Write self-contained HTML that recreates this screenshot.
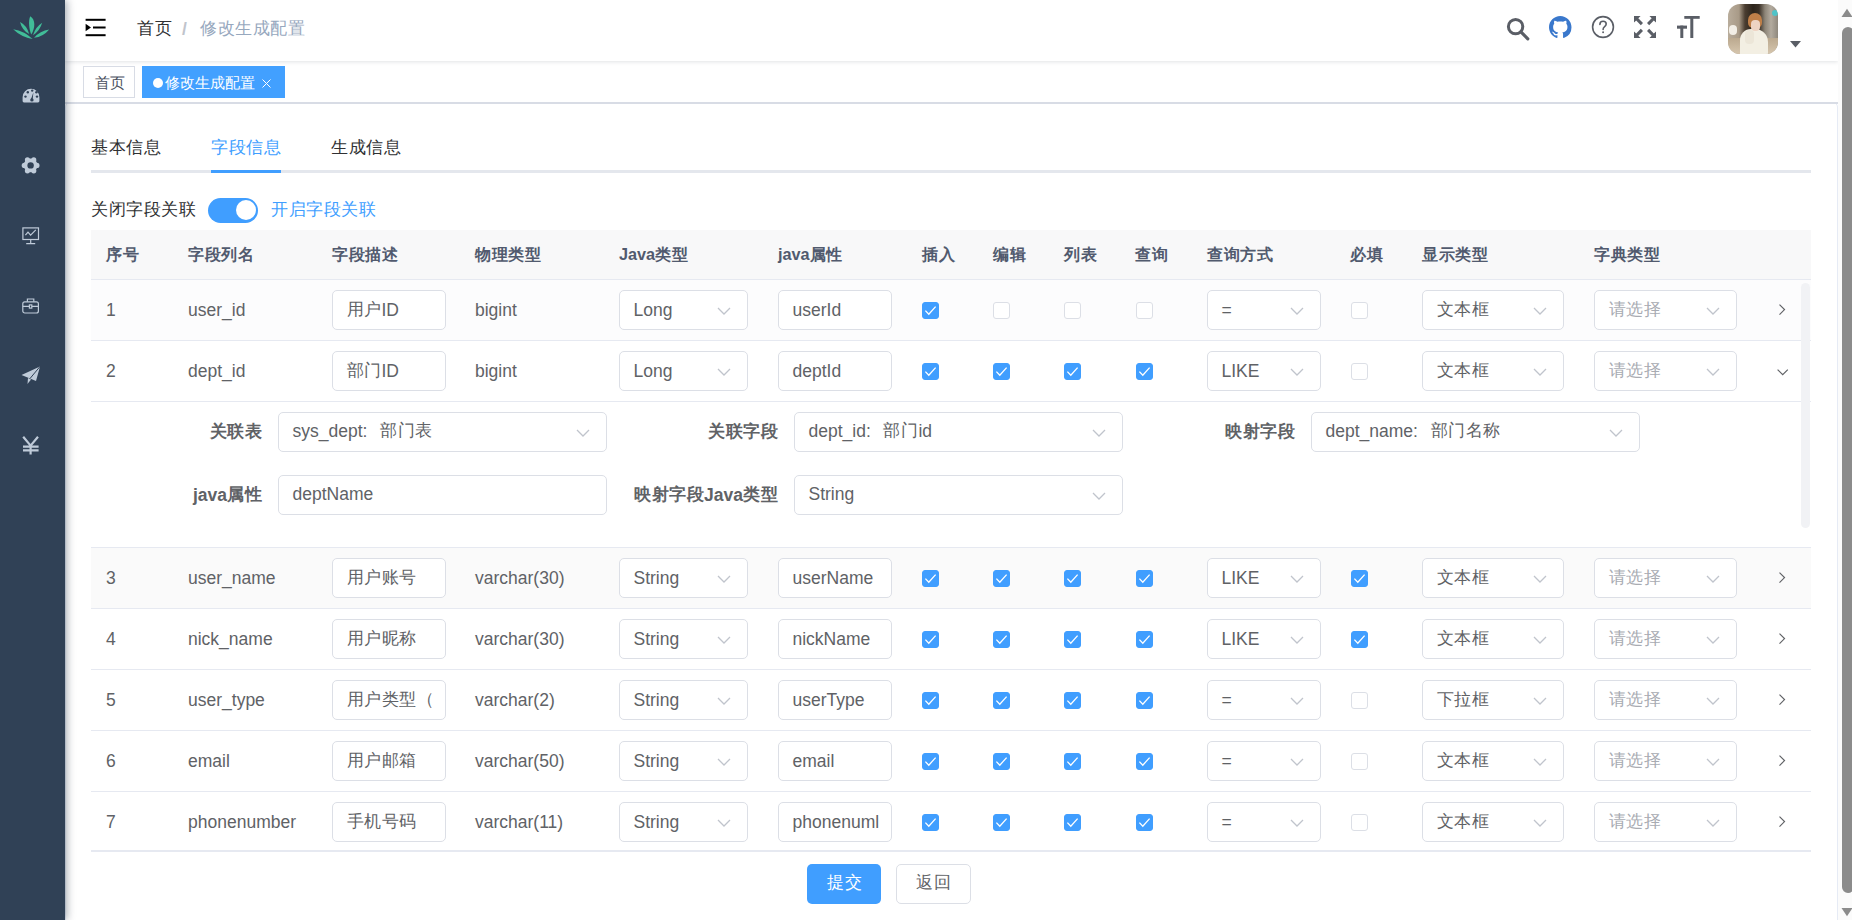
<!DOCTYPE html><html><head><meta charset="utf-8"><title>修改生成配置</title><style>
*{box-sizing:border-box;}
html,body{margin:0;padding:0;}
body{width:1852px;height:920px;overflow:hidden;position:relative;background:#fff;font-family:"Liberation Sans", sans-serif;color:#606266;}
.a{position:absolute;}
.t{position:absolute;white-space:nowrap;line-height:1;}
.inp{position:absolute;border:1px solid #dcdfe6;border-radius:5px;background:#fff;height:40px;}
.inp>span{position:absolute;left:13.5px;top:9px;font-size:17.5px;line-height:20px;color:#606266;white-space:nowrap;}
.sel>span.ph{color:#a8abb2;}
.chev{position:absolute;top:16px;width:14px;height:8px;}
.cb{position:absolute;width:17px;height:17px;border-radius:3px;border:1px solid #dcdfe6;background:#fff;}
.cb.on{background:#409eff;border-color:#409eff;}
.th{position:absolute;top:246px;font-size:16.25px;font-weight:bold;color:#515a6e;line-height:17px;white-space:nowrap;}
.td{position:absolute;font-size:17.5px;color:#606266;line-height:20px;white-space:nowrap;}
.hl{position:absolute;left:91px;width:1720px;height:1px;background:#e6e9f1;}
.lbl{position:absolute;font-size:17.5px;font-weight:bold;color:#606266;line-height:20px;white-space:nowrap;text-align:right;}
</style></head><body>
<div class="a" style="left:65px;top:102px;width:1773px;height:830px;border:1px solid #e6ebf5;border-radius:5px;background:#fff;"></div>
<div class="a" style="left:65px;top:61px;width:1773px;height:43px;background:#fff;border-bottom:2px solid #d8dce5;"></div>
<div class="a" style="left:83px;top:66px;width:52px;height:32px;border:1px solid #d8dce5;background:#fff;"></div>
<div class="t" style="left:95px;top:74px;font-size:15px;line-height:17px;color:#495060;">首页</div>
<div class="a" style="left:142px;top:66px;width:143px;height:32px;background:#42a0ff;"></div>
<div class="a" style="left:153px;top:78px;width:10px;height:10px;border-radius:50%;background:#fff;"></div>
<div class="t" style="left:165px;top:74px;font-size:15px;line-height:17px;color:#fff;">修改生成配置</div>
<svg class="a" style="left:261px;top:78px" width="11" height="11" viewBox="0 0 11 11"><path d="M1.5 1.5 L9.5 9.5 M9.5 1.5 L1.5 9.5" stroke="#fff" stroke-width="1"/></svg>
<div class="a" style="left:65px;top:0;width:1773px;height:61px;background:#fff;box-shadow:0 1px 4px rgba(0,21,41,.12);"></div>
<svg class="a" style="left:85px;top:18px" width="21" height="19" viewBox="0 0 21 19">
<rect x="0.6" y="0.8" width="20" height="2" fill="#000"/>
<rect x="8" y="8.5" width="12.6" height="2" fill="#000"/>
<rect x="0.6" y="16.2" width="20" height="2" fill="#000"/>
<path d="M0.6 5.8 L6 9.5 L0.6 13.2 Z" fill="#000"/>
</svg>
<div class="t" style="left:137px;top:19px;font-size:17.5px;line-height:20px;color:#303133;"><span style="font-size:17px;letter-spacing:0.5px;position:relative;top:-1px">首页</span></div>
<div class="t" style="left:182px;top:19px;font-size:17.5px;line-height:20px;color:#c0c4cc;font-weight:bold;">/</div>
<div class="t" style="left:200px;top:19px;font-size:17.5px;line-height:20px;color:#97a8be;"><span style="font-size:17px;letter-spacing:0.5px;position:relative;top:-1px">修改生成配置</span></div>
<svg class="a" style="left:1506px;top:17px" width="26" height="26" viewBox="0 0 26 26">
<circle cx="9.6" cy="9.6" r="7.2" fill="none" stroke="#5a5e66" stroke-width="3"/>
<path d="M14.9 14.9 L21.8 21.8" stroke="#5a5e66" stroke-width="3.2" stroke-linecap="round"/>
</svg>
<svg class="a" style="left:1549px;top:16px" width="22.5" height="22.5" viewBox="0 0 16 16">
<path fill="#3a78cc" d="M8 0C3.58 0 0 3.58 0 8c0 3.54 2.29 6.53 5.47 7.59.4.07.55-.17.55-.38 0-.19-.01-.82-.01-1.49-2.01.37-2.53-.49-2.69-.94-.09-.23-.48-.94-.82-1.13-.28-.15-.68-.52-.01-.53.63-.01 1.08.58 1.23.82.72 1.21 1.87.87 2.330.66.07-.52.28-.87.51-1.07-1.78-.2-3.64-.89-3.64-3.95 0-.87.31-1.59.82-2.15-.08-.2-.36-1.02.08-2.12 0 0 .67-.21 2.2.82.64-.18 1.32-.27 2-.27.68 0 1.36.09 2 .27 1.53-1.04 2.2-.82 2.2-.82.44 1.1.16 1.92.08 2.12.51.56.82 1.27.82 2.15 0 3.07-1.87 3.75-3.65 3.95.29.25.54.73.54 1.48 0 1.07-.01 1.930-.01 2.2 0 .21.15.46.55.38A8.013 8.013 0 0016 8c0-4.42-3.58-8-8-8z"/>
</svg>
<svg class="a" style="left:1591px;top:15px" width="24" height="24" viewBox="0 0 24 24">
<circle cx="12" cy="12" r="10.4" fill="none" stroke="#5a5e66" stroke-width="1.6"/>
<path d="M8.9 9.4 C8.9 7.5 10.3 6.3 12.1 6.3 C13.9 6.3 15.2 7.5 15.2 9.1 C15.2 10.5 14.3 11.2 13.4 11.9 C12.6 12.5 12.1 13 12.1 14.4" fill="none" stroke="#5a5e66" stroke-width="1.6" stroke-linecap="round"/>
<circle cx="12.1" cy="17.2" r="0.95" fill="#5a5e66"/>
</svg>
<svg class="a" style="left:1633px;top:15px" width="24" height="24" viewBox="0 0 24 24" fill="#5a5e66"><path d="M1.0 1.0 L7.6 1.0 L5.3 3.3 L10.0 8.0 L7.8 10.2 L3.2 5.4 L1.0 7.6 Z"/><path d="M23.0 1.0 L16.4 1.0 L18.7 3.3 L14.0 8.0 L16.2 10.2 L20.8 5.4 L23.0 7.6 Z"/><path d="M1.0 23.0 L7.6 23.0 L5.3 20.7 L10.0 16.0 L7.8 13.8 L3.2 18.6 L1.0 16.4 Z"/><path d="M23.0 23.0 L16.4 23.0 L18.7 20.7 L14.0 16.0 L16.2 13.8 L20.8 18.6 L23.0 16.4 Z"/></svg>
<svg class="a" style="left:1676px;top:15px" width="24" height="24" viewBox="0 0 24 24" fill="#5a5e66">
<rect x="8.3" y="1" width="15.4" height="2.8"/>
<rect x="14.3" y="1" width="3" height="22"/>
<rect x="1" y="10.6" width="10" height="3.1"/>
<rect x="4.3" y="10.6" width="3" height="12.4"/>
</svg>
<div class="a" style="left:1728px;top:4px;width:50px;height:50px;border-radius:12px;overflow:hidden;background:linear-gradient(90deg,#b9ad9c 0%,#a89a87 22%,#4a3d30 34%,#2c241b 50%,#3a3026 62%,#8d8578 74%,#b3ab9f 86%,#8f887d 100%);">
<div class="a" style="left:0;top:34px;width:50px;height:16px;background:linear-gradient(180deg,#bba98f,#d6c6ae);"></div>
<div class="a" style="left:1px;top:21px;width:8px;height:10px;border-radius:4px;background:#f2eee6;"></div>
<div class="a" style="left:44px;top:6px;width:6px;height:6px;border-radius:3px;background:#4fc3c8;"></div>
<div class="a" style="left:12px;top:25px;width:28px;height:30px;border-radius:11px 13px 0 0;background:#f3efe3;"></div>
<div class="a" style="left:20px;top:9px;width:14px;height:15px;border-radius:7px 7px 5px 5px;background:#bf7f48;"></div>
<div class="a" style="left:23px;top:16px;width:9px;height:11px;border-radius:4px;background:#eed3c3;"></div>
<div class="a" style="left:17px;top:26px;width:9px;height:14px;border-radius:4px;background:#ece6d8;"></div>
</div>
<svg class="a" style="left:1790px;top:41px" width="11" height="7" viewBox="0 0 11 7"><path d="M0 0 H11 L5.5 6.5 Z" fill="#5a5e66"/></svg>
<div class="a" style="left:0;top:0;width:65px;height:920px;background:#304156;box-shadow:2px 0 8px rgba(0,21,41,.35);"></div>
<svg class="a" style="left:0;top:0" width="65" height="50" viewBox="0 0 65 50" fill="#41bd98">
<path d="M30.2 16.3 C35.8 19.5 35.2 28.5 31.2 34.6 C29 29 28.2 21 30.2 16.3 Z"/>
<path d="M20 22 Q26.8 25.4 29.2 34 Q22.2 30.6 20 22 Z"/>
<path d="M42.2 22.7 Q39.9 30.6 33 35.2 Q35.3 27.1 42.2 22.7 Z"/>
<path d="M13.2 29.2 Q24.3 31 32.6 38.9 Q21.2 37.1 13.2 29.2 Z"/>
<path d="M49.2 29.4 Q43.3 36.6 34 37.8 Q40 30.6 49.2 29.4 Z"/>
</svg>
<svg class="a" style="left:21.5px;top:88px" width="18" height="15" viewBox="0 0 18 15">
<path d="M0.6 13 L0.6 9.2 A8.4 8.4 0 0 1 17.4 9.2 L17.4 13 Q17.4 14.4 16 14.4 L2 14.4 Q0.6 14.4 0.6 13 Z" fill="#bfcbd9"/>
<circle cx="3.5" cy="8.6" r="1.2" fill="#304156"/><circle cx="5.8" cy="4.2" r="1.2" fill="#304156"/>
<circle cx="10.2" cy="2.6" r="1.2" fill="#304156"/><circle cx="15" cy="8.6" r="1.2" fill="#304156"/><circle cx="14.4" cy="4.2" r="1.2" fill="#304156"/>
<path d="M8.8 11.6 L11.4 4.6 L10.6 12 Z" fill="#304156"/><circle cx="9.9" cy="11.9" r="1.7" fill="#304156"/>
</svg>
<svg class="a" style="left:0;top:140px" width="65" height="50" viewBox="0 140 65 50">
<g fill="#bfcbd9"><circle cx="36.90" cy="165.40" r="2.6"/><circle cx="33.75" cy="170.86" r="2.6"/><circle cx="27.45" cy="170.86" r="2.6"/><circle cx="24.30" cy="165.40" r="2.6"/><circle cx="27.45" cy="159.94" r="2.6"/><circle cx="33.75" cy="159.94" r="2.6"/><circle cx="30.6" cy="165.4" r="6.9"/></g><circle cx="30.6" cy="165.4" r="3.2" fill="#304156"/>
</svg>
<svg class="a" style="left:21.5px;top:226.5px" width="18" height="18" viewBox="0 0 18 18" fill="none" stroke="#bfcbd9" stroke-width="1.2">
<rect x="0.9" y="0.9" width="15.6" height="11.6"/>
<path d="M8.7 12.5 V16.6 M4.2 16.6 H13.2"/>
<path d="M3.4 8.2 L6 5.2 L8.6 8.2 L13.8 2.9"/>
</svg>
<svg class="a" style="left:22px;top:297.5px" width="18" height="17" viewBox="0 0 18 17" fill="none" stroke="#bfcbd9" stroke-width="1.2">
<rect x="0.8" y="3.8" width="15.6" height="11.2" rx="2"/>
<path d="M5.4 3.8 V1 H11.8 V3.8 M0.8 8.4 H16.4"/>
<rect x="7.4" y="6.9" width="2.4" height="3.2" fill="#304156"/>
</svg>
<svg class="a" style="left:21px;top:366px" width="20" height="19" viewBox="0 0 20 19">
<path d="M0.5 9 L19 0.5 L15 15 L9 12.5 Z" fill="#bfcbd9"/>
<path d="M7 12 L6.5 18 L10 13.5 Z" fill="#bfcbd9"/>
<path d="M9 12.5 L19 0.5" stroke="#304156" stroke-width="1"/>
</svg>
<svg class="a" style="left:22px;top:436px" width="18" height="19" viewBox="0 0 18 19" fill="none" stroke="#bfcbd9" stroke-width="2.2">
<path d="M1.2 0.8 L8.6 9.6 L16 0.8 M8.6 9.6 V18.6 M1 10.6 H16.6 M1 14.4 H16.6" stroke-linejoin="miter"/>
</svg>
<div class="t" style="left:91px;top:138px;font-size:17.5px;line-height:20px;color:#303133;"><span style="font-size:17px;letter-spacing:0.5px;position:relative;top:-1px">基本信息</span></div>
<div class="t" style="left:211px;top:138px;font-size:17.5px;line-height:20px;color:#409eff;"><span style="font-size:17px;letter-spacing:0.5px;position:relative;top:-1px">字段信息</span></div>
<div class="t" style="left:331px;top:138px;font-size:17.5px;line-height:20px;color:#303133;"><span style="font-size:17px;letter-spacing:0.5px;position:relative;top:-1px">生成信息</span></div>
<div class="a" style="left:91px;top:170px;width:1720px;height:2.5px;background:#e4e7ed;"></div>
<div class="a" style="left:211px;top:170px;width:70px;height:2.5px;background:#409eff;"></div>
<div class="t" style="left:91px;top:200px;font-size:17.5px;line-height:20px;color:#303133;"><span style="font-size:17px;letter-spacing:0.5px;position:relative;top:-1px">关闭字段关联</span></div>
<div class="a" style="left:208px;top:198px;width:50px;height:25px;border-radius:12.5px;background:#409eff;"></div>
<div class="a" style="left:236px;top:200px;width:20px;height:20px;border-radius:50%;background:#fff;"></div>
<div class="t" style="left:271px;top:200px;font-size:17.5px;line-height:20px;color:#409eff;"><span style="font-size:17px;letter-spacing:0.5px;position:relative;top:-1px">开启字段关联</span></div>
<div class="a" style="left:91px;top:230px;width:1720px;height:49px;background:#f8f8f9;"></div>
<div class="hl" style="top:279px"></div>
<div class="th" style="left:106px"><span style="letter-spacing:0.7px">序号</span></div>
<div class="th" style="left:188px"><span style="letter-spacing:0.7px">字段列名</span></div>
<div class="th" style="left:332px"><span style="letter-spacing:0.7px">字段描述</span></div>
<div class="th" style="left:475px"><span style="letter-spacing:0.7px">物理类型</span></div>
<div class="th" style="left:619px">Java<span style="letter-spacing:0.7px">类型</span></div>
<div class="th" style="left:778px">java<span style="letter-spacing:0.7px">属性</span></div>
<div class="th" style="left:922px"><span style="letter-spacing:0.7px">插入</span></div>
<div class="th" style="left:993px"><span style="letter-spacing:0.7px">编辑</span></div>
<div class="th" style="left:1064px"><span style="letter-spacing:0.7px">列表</span></div>
<div class="th" style="left:1135px"><span style="letter-spacing:0.7px">查询</span></div>
<div class="th" style="left:1207px"><span style="letter-spacing:0.7px">查询方式</span></div>
<div class="th" style="left:1350px"><span style="letter-spacing:0.7px">必填</span></div>
<div class="th" style="left:1422px"><span style="letter-spacing:0.7px">显示类型</span></div>
<div class="th" style="left:1594px"><span style="letter-spacing:0.7px">字典类型</span></div>
<div class="a" style="left:91px;top:280px;width:1720px;height:60px;background:#fcfcfd;"></div>
<div class="a" style="left:91px;top:548px;width:1720px;height:60px;background:#fafafa;"></div>
<div class="hl" style="top:340px"></div>
<div class="hl" style="top:401px"></div>
<div class="hl" style="top:547px"></div>
<div class="hl" style="top:608px"></div>
<div class="hl" style="top:669px"></div>
<div class="hl" style="top:730px"></div>
<div class="hl" style="top:791px"></div>
<div class="hl" style="top:850px;height:2px;"></div>
<div class="td" style="left:106px;top:300px">1</div>
<div class="td" style="left:188px;top:300px">user_id</div>
<div class="inp" style="left:332px;top:290px;width:114px;overflow:hidden"><span><span style="font-size:17px;letter-spacing:0.5px;position:relative;top:-1px">用户</span>ID</span></div>
<div class="td" style="left:475px;top:300px">bigint</div>
<div class="inp sel" style="left:619px;top:290px;width:129px"><span>Long</span><svg class="chev" style="right:16px" viewBox="0 0 14 8" width="14" height="8"><path d="M1 1 L7 7 L13 1" fill="none" stroke="#c0c4cc" stroke-width="1.3"/></svg></div>
<div class="inp" style="left:778px;top:290px;width:114px;overflow:hidden"><span>userId</span></div>
<div class="cb on" style="left:922px;top:302px"><svg class="a" style="left:-1px;top:-1px" width="17" height="17" viewBox="0 0 17 17"><path d="M3.4 8.6 L6.8 12.2 L13.6 4.6" fill="none" stroke="#fff" stroke-width="1.3"/></svg></div>
<div class="cb" style="left:993px;top:302px"></div>
<div class="cb" style="left:1064px;top:302px"></div>
<div class="cb" style="left:1136px;top:302px"></div>
<div class="inp sel" style="left:1207px;top:290px;width:114px"><span>=</span><svg class="chev" style="right:16px" viewBox="0 0 14 8" width="14" height="8"><path d="M1 1 L7 7 L13 1" fill="none" stroke="#c0c4cc" stroke-width="1.3"/></svg></div>
<div class="cb" style="left:1351px;top:302px"></div>
<div class="inp sel" style="left:1422px;top:290px;width:142px"><span><span style="font-size:17px;letter-spacing:0.5px;position:relative;top:-1px">文本框</span></span><svg class="chev" style="right:16px" viewBox="0 0 14 8" width="14" height="8"><path d="M1 1 L7 7 L13 1" fill="none" stroke="#c0c4cc" stroke-width="1.3"/></svg></div>
<div class="inp sel" style="left:1594px;top:290px;width:143px"><span class="ph"><span style="font-size:17px;letter-spacing:0.5px;position:relative;top:-1px">请选择</span></span><svg class="chev" style="right:16px" viewBox="0 0 14 8" width="14" height="8"><path d="M1 1 L7 7 L13 1" fill="none" stroke="#c0c4cc" stroke-width="1.3"/></svg></div>
<svg class="a" style="left:1770px;top:298px" width="24" height="24" viewBox="1770 298 24 24"><path d="M1779.5 304.6 L1784.5 309.6 L1779.5 314.6" fill="none" stroke="#606266" stroke-width="1.2"/></svg>
<div class="td" style="left:106px;top:361px">2</div>
<div class="td" style="left:188px;top:361px">dept_id</div>
<div class="inp" style="left:332px;top:351px;width:114px;overflow:hidden"><span><span style="font-size:17px;letter-spacing:0.5px;position:relative;top:-1px">部门</span>ID</span></div>
<div class="td" style="left:475px;top:361px">bigint</div>
<div class="inp sel" style="left:619px;top:351px;width:129px"><span>Long</span><svg class="chev" style="right:16px" viewBox="0 0 14 8" width="14" height="8"><path d="M1 1 L7 7 L13 1" fill="none" stroke="#c0c4cc" stroke-width="1.3"/></svg></div>
<div class="inp" style="left:778px;top:351px;width:114px;overflow:hidden"><span>deptId</span></div>
<div class="cb on" style="left:922px;top:363px"><svg class="a" style="left:-1px;top:-1px" width="17" height="17" viewBox="0 0 17 17"><path d="M3.4 8.6 L6.8 12.2 L13.6 4.6" fill="none" stroke="#fff" stroke-width="1.3"/></svg></div>
<div class="cb on" style="left:993px;top:363px"><svg class="a" style="left:-1px;top:-1px" width="17" height="17" viewBox="0 0 17 17"><path d="M3.4 8.6 L6.8 12.2 L13.6 4.6" fill="none" stroke="#fff" stroke-width="1.3"/></svg></div>
<div class="cb on" style="left:1064px;top:363px"><svg class="a" style="left:-1px;top:-1px" width="17" height="17" viewBox="0 0 17 17"><path d="M3.4 8.6 L6.8 12.2 L13.6 4.6" fill="none" stroke="#fff" stroke-width="1.3"/></svg></div>
<div class="cb on" style="left:1136px;top:363px"><svg class="a" style="left:-1px;top:-1px" width="17" height="17" viewBox="0 0 17 17"><path d="M3.4 8.6 L6.8 12.2 L13.6 4.6" fill="none" stroke="#fff" stroke-width="1.3"/></svg></div>
<div class="inp sel" style="left:1207px;top:351px;width:114px"><span>LIKE</span><svg class="chev" style="right:16px" viewBox="0 0 14 8" width="14" height="8"><path d="M1 1 L7 7 L13 1" fill="none" stroke="#c0c4cc" stroke-width="1.3"/></svg></div>
<div class="cb" style="left:1351px;top:363px"></div>
<div class="inp sel" style="left:1422px;top:351px;width:142px"><span><span style="font-size:17px;letter-spacing:0.5px;position:relative;top:-1px">文本框</span></span><svg class="chev" style="right:16px" viewBox="0 0 14 8" width="14" height="8"><path d="M1 1 L7 7 L13 1" fill="none" stroke="#c0c4cc" stroke-width="1.3"/></svg></div>
<div class="inp sel" style="left:1594px;top:351px;width:143px"><span class="ph"><span style="font-size:17px;letter-spacing:0.5px;position:relative;top:-1px">请选择</span></span><svg class="chev" style="right:16px" viewBox="0 0 14 8" width="14" height="8"><path d="M1 1 L7 7 L13 1" fill="none" stroke="#c0c4cc" stroke-width="1.3"/></svg></div>
<svg class="a" style="left:1770px;top:361px" width="24" height="20" viewBox="1770 361 24 20"><path d="M1777.6 369.6 L1782.7 374.7 L1787.8 369.6" fill="none" stroke="#606266" stroke-width="1.2"/></svg>
<div class="td" style="left:106px;top:568px">3</div>
<div class="td" style="left:188px;top:568px">user_name</div>
<div class="inp" style="left:332px;top:558px;width:114px;overflow:hidden"><span><span style="font-size:17px;letter-spacing:0.5px;position:relative;top:-1px">用户账号</span></span></div>
<div class="td" style="left:475px;top:568px">varchar(30)</div>
<div class="inp sel" style="left:619px;top:558px;width:129px"><span>String</span><svg class="chev" style="right:16px" viewBox="0 0 14 8" width="14" height="8"><path d="M1 1 L7 7 L13 1" fill="none" stroke="#c0c4cc" stroke-width="1.3"/></svg></div>
<div class="inp" style="left:778px;top:558px;width:114px;overflow:hidden"><span>userName</span></div>
<div class="cb on" style="left:922px;top:570px"><svg class="a" style="left:-1px;top:-1px" width="17" height="17" viewBox="0 0 17 17"><path d="M3.4 8.6 L6.8 12.2 L13.6 4.6" fill="none" stroke="#fff" stroke-width="1.3"/></svg></div>
<div class="cb on" style="left:993px;top:570px"><svg class="a" style="left:-1px;top:-1px" width="17" height="17" viewBox="0 0 17 17"><path d="M3.4 8.6 L6.8 12.2 L13.6 4.6" fill="none" stroke="#fff" stroke-width="1.3"/></svg></div>
<div class="cb on" style="left:1064px;top:570px"><svg class="a" style="left:-1px;top:-1px" width="17" height="17" viewBox="0 0 17 17"><path d="M3.4 8.6 L6.8 12.2 L13.6 4.6" fill="none" stroke="#fff" stroke-width="1.3"/></svg></div>
<div class="cb on" style="left:1136px;top:570px"><svg class="a" style="left:-1px;top:-1px" width="17" height="17" viewBox="0 0 17 17"><path d="M3.4 8.6 L6.8 12.2 L13.6 4.6" fill="none" stroke="#fff" stroke-width="1.3"/></svg></div>
<div class="inp sel" style="left:1207px;top:558px;width:114px"><span>LIKE</span><svg class="chev" style="right:16px" viewBox="0 0 14 8" width="14" height="8"><path d="M1 1 L7 7 L13 1" fill="none" stroke="#c0c4cc" stroke-width="1.3"/></svg></div>
<div class="cb on" style="left:1351px;top:570px"><svg class="a" style="left:-1px;top:-1px" width="17" height="17" viewBox="0 0 17 17"><path d="M3.4 8.6 L6.8 12.2 L13.6 4.6" fill="none" stroke="#fff" stroke-width="1.3"/></svg></div>
<div class="inp sel" style="left:1422px;top:558px;width:142px"><span><span style="font-size:17px;letter-spacing:0.5px;position:relative;top:-1px">文本框</span></span><svg class="chev" style="right:16px" viewBox="0 0 14 8" width="14" height="8"><path d="M1 1 L7 7 L13 1" fill="none" stroke="#c0c4cc" stroke-width="1.3"/></svg></div>
<div class="inp sel" style="left:1594px;top:558px;width:143px"><span class="ph"><span style="font-size:17px;letter-spacing:0.5px;position:relative;top:-1px">请选择</span></span><svg class="chev" style="right:16px" viewBox="0 0 14 8" width="14" height="8"><path d="M1 1 L7 7 L13 1" fill="none" stroke="#c0c4cc" stroke-width="1.3"/></svg></div>
<svg class="a" style="left:1770px;top:566px" width="24" height="24" viewBox="1770 566 24 24"><path d="M1779.5 572.6 L1784.5 577.6 L1779.5 582.6" fill="none" stroke="#606266" stroke-width="1.2"/></svg>
<div class="td" style="left:106px;top:629px">4</div>
<div class="td" style="left:188px;top:629px">nick_name</div>
<div class="inp" style="left:332px;top:619px;width:114px;overflow:hidden"><span><span style="font-size:17px;letter-spacing:0.5px;position:relative;top:-1px">用户昵称</span></span></div>
<div class="td" style="left:475px;top:629px">varchar(30)</div>
<div class="inp sel" style="left:619px;top:619px;width:129px"><span>String</span><svg class="chev" style="right:16px" viewBox="0 0 14 8" width="14" height="8"><path d="M1 1 L7 7 L13 1" fill="none" stroke="#c0c4cc" stroke-width="1.3"/></svg></div>
<div class="inp" style="left:778px;top:619px;width:114px;overflow:hidden"><span>nickName</span></div>
<div class="cb on" style="left:922px;top:631px"><svg class="a" style="left:-1px;top:-1px" width="17" height="17" viewBox="0 0 17 17"><path d="M3.4 8.6 L6.8 12.2 L13.6 4.6" fill="none" stroke="#fff" stroke-width="1.3"/></svg></div>
<div class="cb on" style="left:993px;top:631px"><svg class="a" style="left:-1px;top:-1px" width="17" height="17" viewBox="0 0 17 17"><path d="M3.4 8.6 L6.8 12.2 L13.6 4.6" fill="none" stroke="#fff" stroke-width="1.3"/></svg></div>
<div class="cb on" style="left:1064px;top:631px"><svg class="a" style="left:-1px;top:-1px" width="17" height="17" viewBox="0 0 17 17"><path d="M3.4 8.6 L6.8 12.2 L13.6 4.6" fill="none" stroke="#fff" stroke-width="1.3"/></svg></div>
<div class="cb on" style="left:1136px;top:631px"><svg class="a" style="left:-1px;top:-1px" width="17" height="17" viewBox="0 0 17 17"><path d="M3.4 8.6 L6.8 12.2 L13.6 4.6" fill="none" stroke="#fff" stroke-width="1.3"/></svg></div>
<div class="inp sel" style="left:1207px;top:619px;width:114px"><span>LIKE</span><svg class="chev" style="right:16px" viewBox="0 0 14 8" width="14" height="8"><path d="M1 1 L7 7 L13 1" fill="none" stroke="#c0c4cc" stroke-width="1.3"/></svg></div>
<div class="cb on" style="left:1351px;top:631px"><svg class="a" style="left:-1px;top:-1px" width="17" height="17" viewBox="0 0 17 17"><path d="M3.4 8.6 L6.8 12.2 L13.6 4.6" fill="none" stroke="#fff" stroke-width="1.3"/></svg></div>
<div class="inp sel" style="left:1422px;top:619px;width:142px"><span><span style="font-size:17px;letter-spacing:0.5px;position:relative;top:-1px">文本框</span></span><svg class="chev" style="right:16px" viewBox="0 0 14 8" width="14" height="8"><path d="M1 1 L7 7 L13 1" fill="none" stroke="#c0c4cc" stroke-width="1.3"/></svg></div>
<div class="inp sel" style="left:1594px;top:619px;width:143px"><span class="ph"><span style="font-size:17px;letter-spacing:0.5px;position:relative;top:-1px">请选择</span></span><svg class="chev" style="right:16px" viewBox="0 0 14 8" width="14" height="8"><path d="M1 1 L7 7 L13 1" fill="none" stroke="#c0c4cc" stroke-width="1.3"/></svg></div>
<svg class="a" style="left:1770px;top:627px" width="24" height="24" viewBox="1770 627 24 24"><path d="M1779.5 633.6 L1784.5 638.6 L1779.5 643.6" fill="none" stroke="#606266" stroke-width="1.2"/></svg>
<div class="td" style="left:106px;top:690px">5</div>
<div class="td" style="left:188px;top:690px">user_type</div>
<div class="inp" style="left:332px;top:680px;width:114px;overflow:hidden"><span><span style="font-size:17px;letter-spacing:0.5px;position:relative;top:-1px">用户类型（</span></span></div>
<div class="td" style="left:475px;top:690px">varchar(2)</div>
<div class="inp sel" style="left:619px;top:680px;width:129px"><span>String</span><svg class="chev" style="right:16px" viewBox="0 0 14 8" width="14" height="8"><path d="M1 1 L7 7 L13 1" fill="none" stroke="#c0c4cc" stroke-width="1.3"/></svg></div>
<div class="inp" style="left:778px;top:680px;width:114px;overflow:hidden"><span>userType</span></div>
<div class="cb on" style="left:922px;top:692px"><svg class="a" style="left:-1px;top:-1px" width="17" height="17" viewBox="0 0 17 17"><path d="M3.4 8.6 L6.8 12.2 L13.6 4.6" fill="none" stroke="#fff" stroke-width="1.3"/></svg></div>
<div class="cb on" style="left:993px;top:692px"><svg class="a" style="left:-1px;top:-1px" width="17" height="17" viewBox="0 0 17 17"><path d="M3.4 8.6 L6.8 12.2 L13.6 4.6" fill="none" stroke="#fff" stroke-width="1.3"/></svg></div>
<div class="cb on" style="left:1064px;top:692px"><svg class="a" style="left:-1px;top:-1px" width="17" height="17" viewBox="0 0 17 17"><path d="M3.4 8.6 L6.8 12.2 L13.6 4.6" fill="none" stroke="#fff" stroke-width="1.3"/></svg></div>
<div class="cb on" style="left:1136px;top:692px"><svg class="a" style="left:-1px;top:-1px" width="17" height="17" viewBox="0 0 17 17"><path d="M3.4 8.6 L6.8 12.2 L13.6 4.6" fill="none" stroke="#fff" stroke-width="1.3"/></svg></div>
<div class="inp sel" style="left:1207px;top:680px;width:114px"><span>=</span><svg class="chev" style="right:16px" viewBox="0 0 14 8" width="14" height="8"><path d="M1 1 L7 7 L13 1" fill="none" stroke="#c0c4cc" stroke-width="1.3"/></svg></div>
<div class="cb" style="left:1351px;top:692px"></div>
<div class="inp sel" style="left:1422px;top:680px;width:142px"><span><span style="font-size:17px;letter-spacing:0.5px;position:relative;top:-1px">下拉框</span></span><svg class="chev" style="right:16px" viewBox="0 0 14 8" width="14" height="8"><path d="M1 1 L7 7 L13 1" fill="none" stroke="#c0c4cc" stroke-width="1.3"/></svg></div>
<div class="inp sel" style="left:1594px;top:680px;width:143px"><span class="ph"><span style="font-size:17px;letter-spacing:0.5px;position:relative;top:-1px">请选择</span></span><svg class="chev" style="right:16px" viewBox="0 0 14 8" width="14" height="8"><path d="M1 1 L7 7 L13 1" fill="none" stroke="#c0c4cc" stroke-width="1.3"/></svg></div>
<svg class="a" style="left:1770px;top:688px" width="24" height="24" viewBox="1770 688 24 24"><path d="M1779.5 694.6 L1784.5 699.6 L1779.5 704.6" fill="none" stroke="#606266" stroke-width="1.2"/></svg>
<div class="td" style="left:106px;top:751px">6</div>
<div class="td" style="left:188px;top:751px">email</div>
<div class="inp" style="left:332px;top:741px;width:114px;overflow:hidden"><span><span style="font-size:17px;letter-spacing:0.5px;position:relative;top:-1px">用户邮箱</span></span></div>
<div class="td" style="left:475px;top:751px">varchar(50)</div>
<div class="inp sel" style="left:619px;top:741px;width:129px"><span>String</span><svg class="chev" style="right:16px" viewBox="0 0 14 8" width="14" height="8"><path d="M1 1 L7 7 L13 1" fill="none" stroke="#c0c4cc" stroke-width="1.3"/></svg></div>
<div class="inp" style="left:778px;top:741px;width:114px;overflow:hidden"><span>email</span></div>
<div class="cb on" style="left:922px;top:753px"><svg class="a" style="left:-1px;top:-1px" width="17" height="17" viewBox="0 0 17 17"><path d="M3.4 8.6 L6.8 12.2 L13.6 4.6" fill="none" stroke="#fff" stroke-width="1.3"/></svg></div>
<div class="cb on" style="left:993px;top:753px"><svg class="a" style="left:-1px;top:-1px" width="17" height="17" viewBox="0 0 17 17"><path d="M3.4 8.6 L6.8 12.2 L13.6 4.6" fill="none" stroke="#fff" stroke-width="1.3"/></svg></div>
<div class="cb on" style="left:1064px;top:753px"><svg class="a" style="left:-1px;top:-1px" width="17" height="17" viewBox="0 0 17 17"><path d="M3.4 8.6 L6.8 12.2 L13.6 4.6" fill="none" stroke="#fff" stroke-width="1.3"/></svg></div>
<div class="cb on" style="left:1136px;top:753px"><svg class="a" style="left:-1px;top:-1px" width="17" height="17" viewBox="0 0 17 17"><path d="M3.4 8.6 L6.8 12.2 L13.6 4.6" fill="none" stroke="#fff" stroke-width="1.3"/></svg></div>
<div class="inp sel" style="left:1207px;top:741px;width:114px"><span>=</span><svg class="chev" style="right:16px" viewBox="0 0 14 8" width="14" height="8"><path d="M1 1 L7 7 L13 1" fill="none" stroke="#c0c4cc" stroke-width="1.3"/></svg></div>
<div class="cb" style="left:1351px;top:753px"></div>
<div class="inp sel" style="left:1422px;top:741px;width:142px"><span><span style="font-size:17px;letter-spacing:0.5px;position:relative;top:-1px">文本框</span></span><svg class="chev" style="right:16px" viewBox="0 0 14 8" width="14" height="8"><path d="M1 1 L7 7 L13 1" fill="none" stroke="#c0c4cc" stroke-width="1.3"/></svg></div>
<div class="inp sel" style="left:1594px;top:741px;width:143px"><span class="ph"><span style="font-size:17px;letter-spacing:0.5px;position:relative;top:-1px">请选择</span></span><svg class="chev" style="right:16px" viewBox="0 0 14 8" width="14" height="8"><path d="M1 1 L7 7 L13 1" fill="none" stroke="#c0c4cc" stroke-width="1.3"/></svg></div>
<svg class="a" style="left:1770px;top:749px" width="24" height="24" viewBox="1770 749 24 24"><path d="M1779.5 755.6 L1784.5 760.6 L1779.5 765.6" fill="none" stroke="#606266" stroke-width="1.2"/></svg>
<div class="td" style="left:106px;top:812px">7</div>
<div class="td" style="left:188px;top:812px">phonenumber</div>
<div class="inp" style="left:332px;top:802px;width:114px;overflow:hidden"><span><span style="font-size:17px;letter-spacing:0.5px;position:relative;top:-1px">手机号码</span></span></div>
<div class="td" style="left:475px;top:812px">varchar(11)</div>
<div class="inp sel" style="left:619px;top:802px;width:129px"><span>String</span><svg class="chev" style="right:16px" viewBox="0 0 14 8" width="14" height="8"><path d="M1 1 L7 7 L13 1" fill="none" stroke="#c0c4cc" stroke-width="1.3"/></svg></div>
<div class="inp" style="left:778px;top:802px;width:114px;overflow:hidden"><span>phonenuml</span></div>
<div class="cb on" style="left:922px;top:814px"><svg class="a" style="left:-1px;top:-1px" width="17" height="17" viewBox="0 0 17 17"><path d="M3.4 8.6 L6.8 12.2 L13.6 4.6" fill="none" stroke="#fff" stroke-width="1.3"/></svg></div>
<div class="cb on" style="left:993px;top:814px"><svg class="a" style="left:-1px;top:-1px" width="17" height="17" viewBox="0 0 17 17"><path d="M3.4 8.6 L6.8 12.2 L13.6 4.6" fill="none" stroke="#fff" stroke-width="1.3"/></svg></div>
<div class="cb on" style="left:1064px;top:814px"><svg class="a" style="left:-1px;top:-1px" width="17" height="17" viewBox="0 0 17 17"><path d="M3.4 8.6 L6.8 12.2 L13.6 4.6" fill="none" stroke="#fff" stroke-width="1.3"/></svg></div>
<div class="cb on" style="left:1136px;top:814px"><svg class="a" style="left:-1px;top:-1px" width="17" height="17" viewBox="0 0 17 17"><path d="M3.4 8.6 L6.8 12.2 L13.6 4.6" fill="none" stroke="#fff" stroke-width="1.3"/></svg></div>
<div class="inp sel" style="left:1207px;top:802px;width:114px"><span>=</span><svg class="chev" style="right:16px" viewBox="0 0 14 8" width="14" height="8"><path d="M1 1 L7 7 L13 1" fill="none" stroke="#c0c4cc" stroke-width="1.3"/></svg></div>
<div class="cb" style="left:1351px;top:814px"></div>
<div class="inp sel" style="left:1422px;top:802px;width:142px"><span><span style="font-size:17px;letter-spacing:0.5px;position:relative;top:-1px">文本框</span></span><svg class="chev" style="right:16px" viewBox="0 0 14 8" width="14" height="8"><path d="M1 1 L7 7 L13 1" fill="none" stroke="#c0c4cc" stroke-width="1.3"/></svg></div>
<div class="inp sel" style="left:1594px;top:802px;width:143px"><span class="ph"><span style="font-size:17px;letter-spacing:0.5px;position:relative;top:-1px">请选择</span></span><svg class="chev" style="right:16px" viewBox="0 0 14 8" width="14" height="8"><path d="M1 1 L7 7 L13 1" fill="none" stroke="#c0c4cc" stroke-width="1.3"/></svg></div>
<svg class="a" style="left:1770px;top:810px" width="24" height="24" viewBox="1770 810 24 24"><path d="M1779.5 816.6 L1784.5 821.6 L1779.5 826.6" fill="none" stroke="#606266" stroke-width="1.2"/></svg>
<div class="lbl" style="left:150px;width:112px;top:422px"><span style="font-size:17px;letter-spacing:0.5px;position:relative;top:-1px">关联表</span></div>
<div class="inp sel" style="left:278px;top:412px;width:329px"><span style="top:8px">sys_dept<span style="display:inline-block;width:17.5px">:</span><span style="font-size:17px;letter-spacing:0.5px;position:relative;top:-1px">部门表</span></span><svg class="chev" style="right:16px" viewBox="0 0 14 8" width="14" height="8"><path d="M1 1 L7 7 L13 1" fill="none" stroke="#c0c4cc" stroke-width="1.3"/></svg></div>
<div class="lbl" style="left:620px;width:158px;top:422px"><span style="font-size:17px;letter-spacing:0.5px;position:relative;top:-1px">关联字段</span></div>
<div class="inp sel" style="left:794px;top:412px;width:329px"><span style="top:8px">dept_id<span style="display:inline-block;width:17.5px">:</span><span style="font-size:17px;letter-spacing:0.5px;position:relative;top:-1px">部门</span>id</span><svg class="chev" style="right:16px" viewBox="0 0 14 8" width="14" height="8"><path d="M1 1 L7 7 L13 1" fill="none" stroke="#c0c4cc" stroke-width="1.3"/></svg></div>
<div class="lbl" style="left:1140px;width:155px;top:422px"><span style="font-size:17px;letter-spacing:0.5px;position:relative;top:-1px">映射字段</span></div>
<div class="inp sel" style="left:1311px;top:412px;width:329px"><span style="top:8px">dept_name<span style="display:inline-block;width:17.5px">:</span><span style="font-size:17px;letter-spacing:0.5px;position:relative;top:-1px">部门名称</span></span><svg class="chev" style="right:16px" viewBox="0 0 14 8" width="14" height="8"><path d="M1 1 L7 7 L13 1" fill="none" stroke="#c0c4cc" stroke-width="1.3"/></svg></div>
<div class="lbl" style="left:150px;width:112px;top:485px">java<span style="font-size:17px;letter-spacing:0.5px;position:relative;top:-1px">属性</span></div>
<div class="inp" style="left:278px;top:475px;width:329px"><span style="top:8px">deptName</span></div>
<div class="lbl" style="left:600px;width:178px;top:485px"><span style="font-size:17px;letter-spacing:0.5px;position:relative;top:-1px">映射字段</span>Java<span style="font-size:17px;letter-spacing:0.5px;position:relative;top:-1px">类型</span></div>
<div class="inp sel" style="left:794px;top:475px;width:329px"><span style="top:8px">String</span><svg class="chev" style="right:16px" viewBox="0 0 14 8" width="14" height="8"><path d="M1 1 L7 7 L13 1" fill="none" stroke="#c0c4cc" stroke-width="1.3"/></svg></div>
<div class="a" style="left:1801px;top:283px;width:9px;height:245px;border-radius:5px;background:#f1f2f5;"></div>
<div class="a" style="left:807px;top:864px;width:74px;height:40px;border-radius:5px;background:#409eff;"></div>
<div class="t" style="left:827px;top:873px;font-size:17.5px;line-height:20px;color:#fff;"><span style="font-size:17px;letter-spacing:0.5px;position:relative;top:-1px">提交</span></div>
<div class="a" style="left:896px;top:864px;width:75px;height:40px;border-radius:5px;border:1px solid #dcdfe6;background:#fff;"></div>
<div class="t" style="left:916px;top:873px;font-size:17.5px;line-height:20px;color:#606266;"><span style="font-size:17px;letter-spacing:0.5px;position:relative;top:-1px">返回</span></div>
<div class="a" style="left:1838px;top:0;width:14px;height:920px;background:#fbfbfb;"></div>
<div class="a" style="left:1842px;top:27px;width:12px;height:866px;border-radius:6px;background:#8b8b8b;"></div>
<svg class="a" style="left:1841px;top:8px" width="11" height="10" viewBox="0 0 11 10"><path d="M0.5 9 L6 0.8 L11.5 9 Z" fill="#8b8b8b"/></svg>
<svg class="a" style="left:1841px;top:907px" width="11" height="10" viewBox="0 0 11 10"><path d="M0.5 1 L6 9.2 L11.5 1 Z" fill="#8b8b8b"/></svg>
</body></html>
